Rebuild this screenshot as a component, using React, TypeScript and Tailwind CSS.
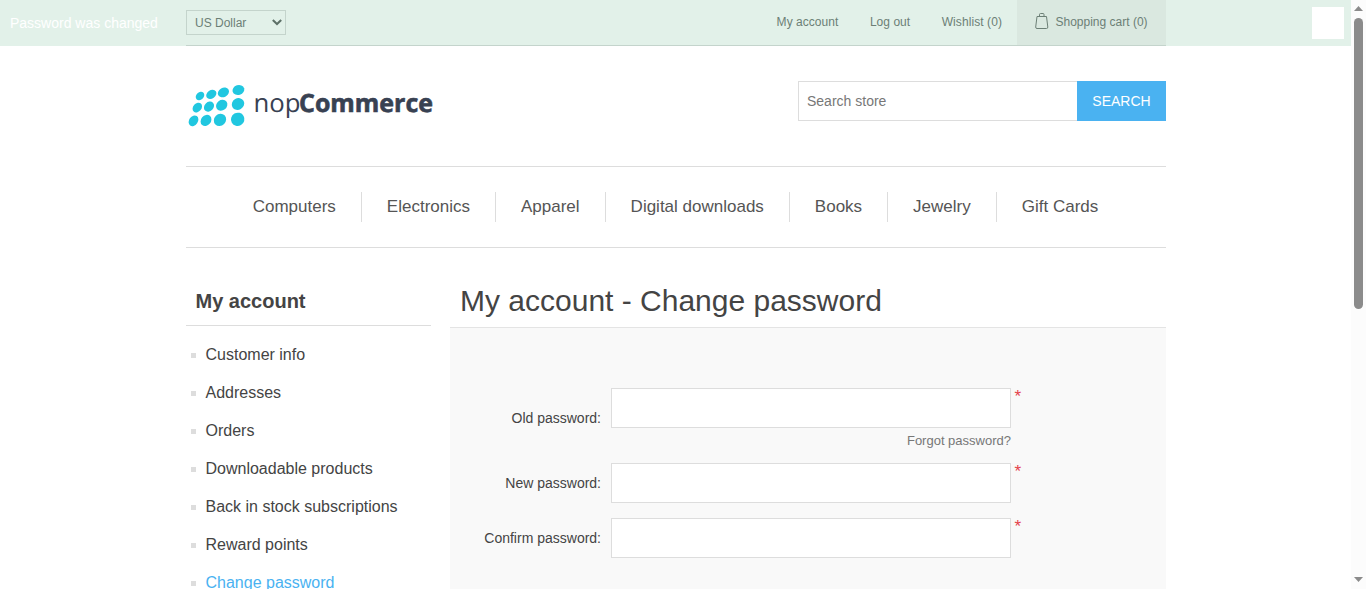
import React from "react";

const navItems = ["Computers", "Electronics", "Apparel", "Digital downloads", "Books", "Jewelry", "Gift Cards"];

const accountLinks = [
  "Customer info",
  "Addresses",
  "Orders",
  "Downloadable products",
  "Back in stock subscriptions",
  "Reward points",
  "Change password",
];

// cx, cy, major radius, minor radius, tilt in degrees
const dots = [
  [20, 26, 4.7, 3.7, -42], [31.3, 24.4, 5.5, 4.2, -35], [43.4, 22.4, 5.9, 4.6, -30], [58.4, 20, 6, 4.9, -18],
  [17.3, 37.6, 5.4, 4.1, -48], [29, 36.6, 5.6, 4.5, -45], [41.7, 35.2, 6, 5.1, -38], [58, 34, 6.4, 5.7, -30],
  [13.5, 50.8, 5.8, 4.4, -55], [26, 50.4, 6, 5, -50], [40, 49.8, 6.5, 5.8, -45], [57.7, 49.3, 6.8, 6.6, -30],
];

function Logo() {
  return (
    <svg width="270" height="70" viewBox="0 0 270 70" className="-ml-1.5 shrink-0" aria-label="nopCommerce">
      {dots.map(([x, y, rx, ry, a]) => (
        <ellipse key={`${x}-${y}`} cx={x} cy={y} rx={rx} ry={ry} fill="#21c7e0" transform={`rotate(${a} ${x} ${y})`} />
      ))}
      <text x="73.5" y="42.4" fontSize="25.5" fill="#384152" textLength="47" lengthAdjust="spacingAndGlyphs" textRendering="geometricPrecision" className="font-['Open_Sans',sans-serif]">
        nop
      </text>
      <text x="119" y="42.4" fontSize="25" fill="#384152" stroke="#384152" strokeWidth="0.6" textLength="134" lengthAdjust="spacingAndGlyphs" textRendering="geometricPrecision" className="font-['Open_Sans',sans-serif] font-bold">
        Commerce
      </text>
    </svg>
  );
}

function TopBar() {
  return (
    <div className="flex h-[46px] items-start bg-[#e2f1e9] text-[12px] text-[#6c7f76]">
      <div className="w-[186px] pt-[13px] pl-[10px] text-[14px] leading-5 text-white">Password was changed</div>
      <div className="flex h-[46px] w-[980px] items-start justify-between border-b border-[#c4d4cc]">
        <div className="mt-[10px] flex h-[25px] w-[100px] items-center justify-between border border-[#c4d4cc] pr-[3px] pl-2">
          <span>US Dollar</span>
          <svg width="10" height="7" viewBox="0 0 10 7" fill="none" stroke="#5d7067" strokeWidth="2">
            <path d="M0.8 1 L5 5 L9.2 1" />
          </svg>
        </div>
        <div className="flex h-[45px] leading-[44px]">
          <span className="mr-[31.5px] tracking-[0.04px]">My account</span>
          <span className="mr-[31.5px] tracking-[0.04px]">Log out</span>
          <span className="mr-[15px] tracking-[0.08px]">Wishlist (0)</span>
          <div className="flex w-[149px] bg-[#dae8e0] pl-[17.5px]">
            <svg width="14" height="18" viewBox="0 0 14 18" fill="none" stroke="#6c7f76" className="mt-[12px] mr-[7px]">
              <path d="M2 4.5 H11.5 L12.8 15 Q12.9 16.5 11.5 16.5 H2 Q.6 16.5 .7 15 Z" />
              <path d="M4.5 4.5 V2.5 Q4.5 1.5 5.5 1.5 H8 Q9 1.5 9 2.5 V4.5" />
            </svg>
            <span>Shopping cart (0)</span>
          </div>
        </div>
      </div>
      <div className="mt-[7px] ml-auto mr-[7px] h-8 w-8 bg-white" />
    </div>
  );
}

function Field({ label, children }: { label: string; children?: React.ReactNode }) {
  return (
    <div className="mb-[15px] flex items-center">
      <label className="w-[151px] text-right text-[14px]">{label}</label>
      <div className="ml-[10px]">
        <div className="flex">
          <input type="password" aria-label={label} className="h-10 w-[400px] border border-[#dddddd] bg-white px-2 outline-none" />
          <span className="ml-[3.5px] text-[17px] leading-[18px] text-[#e4434b]">*</span>
        </div>
        {children}
      </div>
    </div>
  );
}

export default function App() {
  return (
    <div className="flex h-[589px] w-[1366px] overflow-hidden bg-white font-['Liberation_Sans',Arial,sans-serif] text-[#444444]">
      <div className="w-[1351px] shrink-0">
        <TopBar />
        <div className="ml-[186px] w-[980px]">
          <header className="flex h-[120px] justify-between">
            <div className="pt-[24px]"><Logo /></div>
            <div className="mt-[35px] flex h-10">
              <input placeholder="Search store" className="h-10 w-[279px] border border-r-0 border-[#dddddd] pl-[8px] text-[14px] outline-none placeholder:text-[#777777]" />
              <button className="w-[89px] bg-[#4ab2f1] text-[14px] text-white">SEARCH</button>
            </div>
          </header>
          <nav className="flex h-[82px] items-center justify-center border-y border-[#dddddd] pr-[1px] text-[17px] text-[#555555]">
            {navItems.map((n) => (
              <span key={n} className="h-[30px] border-r border-[#dddddd] px-[25px] leading-[29px] last:border-r-0">{n}</span>
            ))}
          </nav>
          <div className="flex">
            <aside className="w-[245px]">
              <h2 className="h-[78px] border-b border-[#dddddd] pt-[38px] pl-[9.5px] text-[20px] leading-[30px] font-bold">My account</h2>
              <ul className="pt-[10px] pl-[5px] text-[16px]">
                {accountLinks.map((l) => (
                  <li key={l} className="flex h-[38px] items-center">
                    <i className="mr-[9.5px] h-[5px] w-[5px] bg-[#dddddd]" />
                    <span className={l === "Change password" ? "text-[#4ab2f1]" : ""}>{l}</span>
                  </li>
                ))}
              </ul>
            </aside>
            <main className="ml-[19px] w-[716px]">
              <h1 className="h-[80px] border-b border-[#e4e4e4] pt-[33px] pl-[10px] text-[30px] leading-[40px]">My account - Change password</h1>
              <div className="h-[300px] bg-[#f9f9f9] pt-[60px]">
                <Field label="Old password:">
                  <div className="w-[400px] pt-[5px] text-right text-[13px] leading-[15px] text-[#777777]">Forgot password?</div>
                </Field>
                <Field label="New password:" />
                <Field label="Confirm password:" />
              </div>
            </main>
          </div>
        </div>
      </div>
      <div className="flex h-[589px] w-[15px] flex-col items-center bg-[#fcfcfc]">
        <svg width="9" height="5" viewBox="0 0 9 5" className="mt-[6px]"><path d="M4.5 0 9 5H0Z" fill="#8b8b8b" /></svg>
        <div className="mt-[7px] h-[291px] w-[9px] rounded-full bg-[#8b8b8b]" />
        <svg width="9" height="5" viewBox="0 0 9 5" className="mt-auto mb-[7px]"><path d="M0 0H9L4.5 5Z" fill="#8b8b8b" /></svg>
      </div>
    </div>
  );
}
